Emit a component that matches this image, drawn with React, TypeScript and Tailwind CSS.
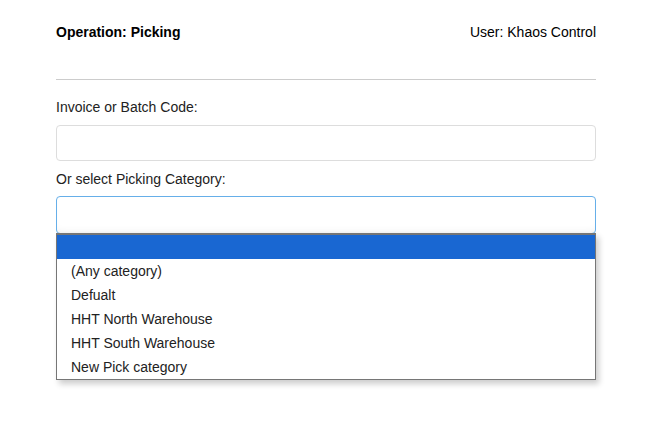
const options = [
  "",
  "(Any category)",
  "Defualt",
  "HHT North Warehouse",
  "HHT South Warehouse",
  "New Pick category",
];

export default function App() {
  return (
    <div
      className="min-h-[421px] w-full bg-white text-[14px] text-[#111]"
      style={{ fontFamily: '"Liberation Sans", Arial, sans-serif' }}
    >
      <div className="ml-[56px] w-[540px] pt-[22px]">
        <div className="flex items-center justify-between leading-[20px]">
          <span className="font-bold text-black">Operation: Picking</span>
          <span className="text-black">User: Khaos Control</span>
        </div>
        <div className="mt-[37px] h-px bg-[#ccc]" />

        <div className="mt-[17px] leading-[20px] text-[#222]">Invoice or Batch Code:</div>
        <div className="mt-[8px] h-[36px] rounded-[4px] border border-[#ddd] bg-white" />

        <div className="mt-[8px] leading-[20px] text-[#222]">Or select Picking Category:</div>
        <div className="relative mt-[7px]">
          <div className="h-[38px] rounded-[4px] border border-[#66afe9] bg-white shadow-[inset_0_-6px_8px_-6px_rgba(0,0,0,0.08)]" />
          <ul className="absolute left-0 right-0 top-[37px] z-10 border border-[#767676] border-t-2 bg-white shadow-[3px_4px_6px_rgba(0,0,0,0.2)]">
            {options.map((o, i) => (
              <li
                key={i}
                className={
                  i === 0
                    ? "h-[24px] bg-[#1967d2] pl-[14px] leading-[24px] text-white"
                    : "h-[24px] pl-[14px] leading-[24px] text-[#222]"
                }
              >
                {o}
              </li>
            ))}
          </ul>
        </div>
      </div>
    </div>
  );
}
